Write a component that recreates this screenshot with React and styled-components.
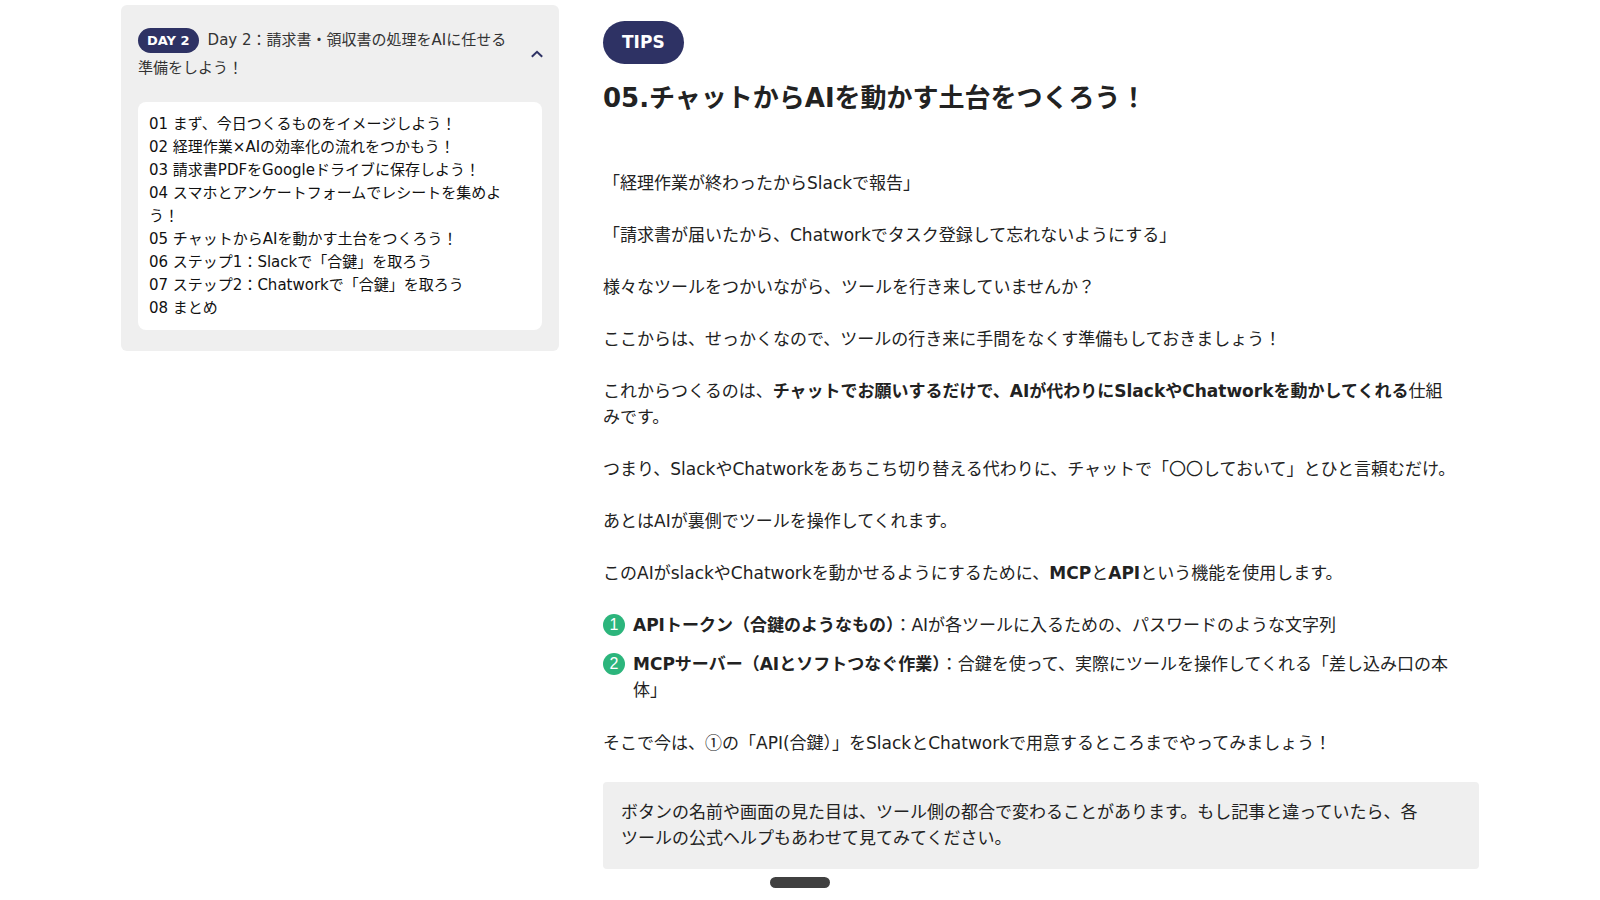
import React, { useState } from "react";
import styled, { createGlobalStyle } from "styled-components";

const GlobalStyle = createGlobalStyle`
  *, *::before, *::after { box-sizing: border-box; }
  body {
    margin: 0;
    background: #fff;
    color: #222;
    font-family: Verdana, "DejaVu Sans", "Noto Sans CJK JP", sans-serif;
    font-size: 17px;
    line-height: 26px;
  }
`;

const Page = styled.div`
  display: grid;
  grid-template-columns: minmax(280px, 438px) minmax(0, 1fr);
  align-items: start;
  gap: 44px;
  max-width: 1358px;
  margin: 0 auto;
`;

const Sidebar = styled.nav`
  margin-top: 5px;
  padding: 21px 17px;
  border-radius: 6px;
  background: #efefef;
`;

const DayToggle = styled.button`
  display: flex;
  align-items: center;
  gap: 12px;
  width: 100%;
  padding: 0;
  border: 0;
  background: none;
  color: #333;
  font: inherit;
  font-size: 15px;
  line-height: 28px;
  text-align: left;
  cursor: pointer;
`;

const DayTitle = styled.span`
  flex: 1;
`;

const Pill = styled.span`
  display: inline-block;
  border-radius: 22px;
  background: #2e3264;
  color: #fff;
  font-weight: 700;
`;

const DayPill = styled(Pill)`
  margin-right: 9px;
  padding: 0 9px;
  font-size: 13px;
  line-height: 25px;
`;

const TipsPill = styled(Pill)`
  padding: 0 19px;
  font-size: 17px;
  line-height: 43px;
`;

const Chevron = styled.svg`
  flex: none;
  width: 14px;
  height: 10px;
  margin-right: -2px;
  transform: ${({ $open }) => ($open ? "none" : "rotate(180deg)")};
`;

const Lessons = styled.ol`
  margin: 20px 0 0;
  padding: 11px 11px 10px;
  border-radius: 8px;
  background: #fff;
  list-style: none;
  font-size: 15px;
  line-height: 23px;
`;

const LessonLink = styled.a`
  color: #111;
  text-decoration: none;
`;

const Article = styled.main`
  padding-top: 21px;
`;

const Title = styled.h1`
  margin: 15px 0 52px;
  font-size: 26px;
  line-height: 39px;
  font-weight: 700;
`;

const Body = styled.div`
  display: flex;
  flex-direction: column;
  gap: 26px;
`;

const Text = styled.p`
  margin: 0;
`;

const Symbol = styled.span`
  font-family: "Noto Sans CJK JP", sans-serif;
`;

const Points = styled.ol`
  display: flex;
  flex-direction: column;
  gap: 13px;
  margin: 0;
  padding: 0;
  list-style: none;
`;

const Point = styled.li`
  display: flex;
  gap: 8px;
`;

const PointText = styled(Text)`
  flex: 1;
`;

const Term = styled.strong`
  white-space: nowrap;
`;

const PointNumber = styled.span`
  flex: none;
  width: 22px;
  height: 22px;
  margin-top: 2px;
  border-radius: 50%;
  background: #2cb57c;
  color: #fff;
  font-family: "Liberation Sans", sans-serif;
  font-size: 16px;
  line-height: 22px;
  text-align: center;
`;

const Note = styled.aside`
  padding: 17px 18px 18px;
  border-radius: 4px;
  background: #efefef;
`;

const Handle = styled.div`
  position: fixed;
  bottom: 12px;
  left: 50%;
  width: 60px;
  height: 11px;
  border-radius: 6px;
  background: #404040;
  transform: translateX(-50%);
`;

const lessons = [
  "まず、今日つくるものをイメージしよう！",
  "経理作業×AIの効率化の流れをつかもう！",
  "請求書PDFをGoogleドライブに保存しよう！",
  "スマホとアンケートフォームでレシートを集めよう！",
  "チャットからAIを動かす土台をつくろう！",
  "ステップ1：Slackで「合鍵」を取ろう",
  "ステップ2：Chatworkで「合鍵」を取ろう",
  "まとめ",
];

const points = [
  {
    term: "APIトークン（合鍵のようなもの）",
    text: "：AIが各ツールに入るための、パスワードのような文字列",
  },
  {
    term: "MCPサーバー（AIとソフトつなぐ作業）",
    text: (
      <>
        ：合鍵を使って、実際にツールを操作してくれる「差し込み口の本
        <br />
        体」
      </>
    ),
  },
];

export default function App() {
  const [open, setOpen] = useState(true);

  return (
    <>
      <GlobalStyle />
      <Page lang="ja">
        <Sidebar>
          <DayToggle type="button" aria-expanded={open} onClick={() => setOpen(!open)}>
            <DayTitle>
              <DayPill>DAY 2</DayPill>
              Day 2：請求書・領収書の処理をAIに任せる準備をしよう！
            </DayTitle>
            <Chevron $open={open} viewBox="0 0 14 10" aria-hidden="true">
              <path d="M1.8 7.8 7 2.8l5.2 5" fill="none" stroke="#2e3264" strokeWidth="2" />
            </Chevron>
          </DayToggle>
          {open && (
            <Lessons>
              {lessons.map((lesson, i) => (
                <li key={lesson}>
                  <LessonLink href={`#lesson-${i + 1}`}>
                    {`0${i + 1} ${lesson}`}
                  </LessonLink>
                </li>
              ))}
            </Lessons>
          )}
        </Sidebar>

        <Article>
          <TipsPill>TIPS</TipsPill>
          <Title>05.チャットからAIを動かす土台をつくろう！</Title>
          <Body>
            <Text>「経理作業が終わったからSlackで報告」</Text>
            <Text>「請求書が届いたから、Chatworkでタスク登録して忘れないようにする」</Text>
            <Text>様々なツールをつかいながら、ツールを行き来していませんか？</Text>
            <Text>ここからは、せっかくなので、ツールの行き来に手間をなくす準備もしておきましょう！</Text>
            <Text>
              これからつくるのは、
              <strong>チャットでお願いするだけで、AIが代わりにSlackやChatworkを動かしてくれる</strong>
              仕組
              <br />
              みです。
            </Text>
            <Text>
              つまり、SlackやChatworkをあちこち切り替える代わりに、チャットで「〇〇しておいて」とひと言頼むだけ。
            </Text>
            <Text>あとはAIが裏側でツールを操作してくれます。</Text>
            <Text>
              このAIがslackやChatworkを動かせるようにするために、<strong>MCP</strong>と
              <strong>API</strong>という機能を使用します。
            </Text>
            <Points>
              {points.map((point, i) => (
                <Point key={point.term}>
                  <PointNumber>{i + 1}</PointNumber>
                  <PointText>
                    <Term>{point.term}</Term>
                    {point.text}
                  </PointText>
                </Point>
              ))}
            </Points>
            <Text>
              そこで今は、<Symbol>①</Symbol>の「API(合鍵）」をSlackとChatworkで用意するところまでやってみましょう！
            </Text>
            <Note>
              ボタンの名前や画面の見た目は、ツール側の都合で変わることがあります。もし記事と違っていたら、各
              <br />
              ツールの公式ヘルプもあわせて見てみてください。
            </Note>
          </Body>
        </Article>
      </Page>
      <Handle />
    </>
  );
}
